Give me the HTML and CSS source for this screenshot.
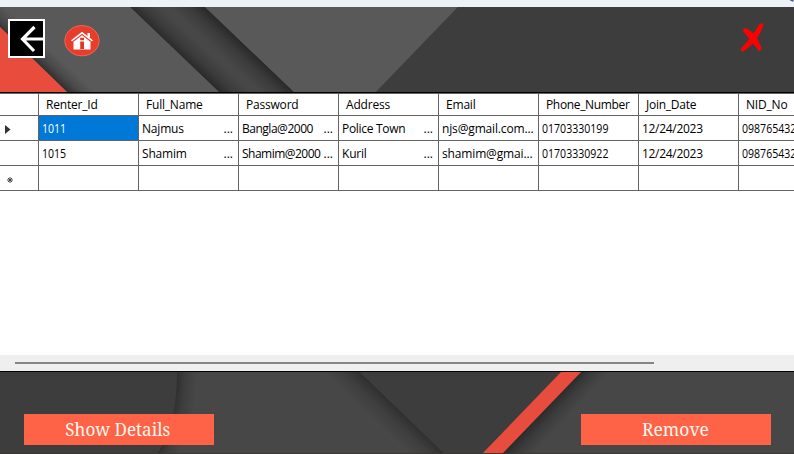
FILE: index.html
```html
<!DOCTYPE html>
<html lang="en">
<head>
<meta charset="utf-8">
<title>Renters</title>
<link rel="stylesheet" href="styles.css">
</head>
<body>
<div class="window">
  <div class="titlebar"><svg class="corner" viewBox="0 0 6 3"><path d="M0 0H6V2.500Q2 2 0 0Z" fill="#3158a5"/></svg></div>
  <header class="top">
    <svg class="backdrop" viewBox="0 0 794 85" preserveAspectRatio="none">
      <defs>
        <linearGradient id="s1" gradientUnits="userSpaceOnUse" x1="174" y1="43" x2="189" y2="27"><stop stop-color="#292929"/><stop offset=".45" stop-color="#3b3b3b"/><stop offset="1" stop-color="#474747"/></linearGradient>
        <linearGradient id="s2" gradientUnits="userSpaceOnUse" x1="250" y1="43" x2="234" y2="60"><stop stop-color="#292929"/><stop offset=".45" stop-color="#3b3b3b"/><stop offset="1" stop-color="#474747"/></linearGradient>
        <linearGradient id="s3" gradientUnits="userSpaceOnUse" x1="33" y1="53" x2="46" y2="39"><stop stop-color="#303030"/><stop offset=".45" stop-color="#494949"/><stop offset="1" stop-color="#595959"/></linearGradient>
      </defs>
      <rect width="794" height="85" fill="#474747"/>
      <path d="M130 0H168L256 85H219Z" fill="url(#s1)"/>
      <path d="M168 0H205L294 85H256Z" fill="url(#s2)"/>
      <path d="M0 0H130L219 85H0Z" fill="#595959"/>
      <path d="M0 0H20L105 85H67L0 20Z" fill="url(#s3)"/>
      <path d="M205 0H458L376 85H294Z" fill="#595959"/>
      <path d="M458 0H794V85H376Z" fill="#3d3d3d"/>
      <path d="M0 20L67 85H0Z" fill="#e84c3d"/>
    </svg>
    <button class="icon back" aria-label="Back"><svg viewBox="0 0 37 39"><rect x="1" y="1" width="35" height="37" fill="#000" stroke="#fff" stroke-width="2"/><path d="M36 20H15M26.500 8L14.500 20L26 32" fill="none" stroke="#fff" stroke-width="3.200"/></svg></button>
    <button class="icon home" aria-label="Home"><svg viewBox="0 0 36 32"><ellipse cx="18" cy="15.700" rx="17.300" ry="15.100" fill="#e83d2b" stroke="#ee7466" stroke-width=".8"/><path d="M7.500 15.800L18 7.800L28.500 15.800" fill="none" stroke="#fff" stroke-width="1.500"/><path d="M23.500 8H26V13L23.500 11.500Z" fill="#fff"/><path d="M9.500 16.800L18 10.200L26.500 16.800V24.500H9.500Z" fill="#fff"/><path d="M16.200 16.500H20V24H16.200ZM16.200 12.800H20V15.200H16.200Z" fill="#dc3927"/></svg></button>
    <button class="icon close" aria-label="Close"><svg viewBox="0 0 24 29"><path d="M4.500 6C10 7.500 17 14 20.500 25L19.500 27C15 21 8 13 4 7.500ZM22.500 1.500C20 11 11 23 2.500 27.500L1.500 26.500C9 19 15 11 20.500 1.500Z" fill="#f00" stroke="#f00" stroke-width="2" stroke-linejoin="round"/></svg></button>
  </header>
  <main class="grid-view">
    <table>
      <thead><tr><th class="marker"></th><th>Renter_Id</th><th>Full_Name</th><th>Password</th><th>Address</th><th>Email</th><th><span class="phone">Phone_Number</span></th><th><span class="join">Join_Date</span></th><th>NID_No</th></tr></thead>
      <tbody>
        <tr><td class="marker"><svg class="arrow" viewBox="0 0 6 9"><path d="M0 0L5.500 4.500L0 9Z"/></svg></td><td class="selected"><p><span class="num">1011</span></p></td><td><p><span>Najmus</span><i>...</i></p></td><td><p><span class="bangla">Bangla@2000</span><i>...</i></p></td><td><p><span class="town">Police Town</span><i>...</i></p></td><td><p><span class="mail">njs@gmail.com...</span></p></td><td><p><span class="num">01703330199</span></p></td><td><p><span class="date">12/24/2023</span></p></td><td><p><span class="num">098765432</span></p></td></tr>
        <tr><td class="marker"></td><td><p><span class="num">1015</span></p></td><td><p><span>Shamim</span><i>...</i></p></td><td><p class="tight"><span class="shamim">Shamim@2000</span><i>...</i></p></td><td><p><span>Kuril</span><i>...</i></p></td><td><p><span class="mail">shamim@gmai...</span></p></td><td><p><span class="num">01703330922</span></p></td><td><p><span class="date">12/24/2023</span></p></td><td><p><span class="num">098765432</span></p></td></tr>
        <tr><td class="marker"><svg class="new" viewBox="0 0 6 6"><path d="M3 0V6M0 3H6M1 1L5 5M5 1L1 5" stroke="#444"/></svg></td><td></td><td></td><td></td><td></td><td></td><td></td><td></td><td></td></tr>
      </tbody>
    </table>
    <div class="scrollbar"><div class="thumb"></div></div>
  </main>
  <footer class="bottom">
    <svg class="backdrop" viewBox="0 0 794 82" preserveAspectRatio="none">
      <defs>
        <radialGradient id="s4" gradientUnits="userSpaceOnUse" cx="-1" cy="0" r="198"><stop offset=".9" stop-color="#303030"/><stop offset=".94" stop-color="#3d3d3d"/><stop offset="1" stop-color="#474747"/></radialGradient>
        <linearGradient id="s5" gradientUnits="userSpaceOnUse" x1="402" y1="41" x2="385" y2="59"><stop stop-color="#303030"/><stop offset=".45" stop-color="#3e3e3e"/><stop offset="1" stop-color="#474747"/></linearGradient>
        <linearGradient id="s6" gradientUnits="userSpaceOnUse" x1="541" y1="41" x2="557" y2="56"><stop stop-color="#2b2b2b"/><stop offset=".45" stop-color="#3b3b3b"/><stop offset="1" stop-color="#474747"/></linearGradient>
      </defs>
      <rect width="794" height="82" fill="#474747"/>
      <rect width="240" height="82" fill="url(#s4)"/>
      <path d="M0 0H177C177 35 171 61 157 82H0Z" fill="#3d3d3d"/>
      <path d="M300 0H360L445 82H300Z" fill="url(#s5)"/>
      <path d="M581 0H660V82H502Z" fill="url(#s6)"/>
      <path d="M360 0H563L482 82H445Z" fill="#3d3d3d"/>
      <path d="M561 0H581L502 82H482Z" fill="#e84c3d"/>
      <path d="M0 81.500H794" stroke="#3c3536"/>
    </svg>
    <button class="action"><span class="show">Show Details</span></button>
    <button class="action"><span class="remove">Remove</span></button>
  </footer>
</div>
</body>
</html>
```
FILE: styles.css
```css
* { box-sizing: border-box; }
body { margin: 0; overflow: hidden; }
.window { width: 794px; height: 454px; display: flex; flex-direction: column; overflow: hidden; }
.titlebar { height: 7px; background: #edf2f7; display: flex; justify-content: flex-end; }
.corner { width: 5px; height: 2px; }
.top { height: 85px; position: relative; display: flex; align-items: flex-start; padding: 12px 30px 0 8px; }
.backdrop { position: absolute; inset: 0; width: 100%; height: 100%; overflow: hidden; }
button { border: 0; padding: 0; background: none; position: relative; }
.icon svg { display: block; width: 100%; height: 100%; }
.back { width: 37px; height: 39px; }
.home { width: 36px; height: 32px; margin: 6px 0 0 19px; }
.close { width: 24px; height: 29px; margin: 4px 0 0 auto; }
.grid-view { height: 280px; border-top: 1px solid #000; border-bottom: 1px solid #000; background: #fff; display: flex; flex-direction: column; overflow: hidden; }
table { width: 839px; table-layout: fixed; border-collapse: separate; border-spacing: 0; border-top: 1px solid #646464; font: 12px/16px "Open Sans", "Noto Sans", sans-serif; color: #000; }
th, td { width: 100px; height: 25px; padding: 2px 3px 0; border-right: 1px solid #646464; border-bottom: 1px solid #646464; font-weight: 400; text-align: left; white-space: nowrap; overflow: hidden; }
th { height: 22px; padding: 1px 7px 0; letter-spacing: -.2px; }
.marker { width: 39px; padding: 0 5px; }
td p { margin: 0; display: flex; justify-content: space-between; }
td i { font-style: normal; padding-right: 2px; }
.selected { background: #0078d7; color: #fff; }
.arrow { display: block; width: 6px; height: 9px; margin-top: 2px; fill: #333; }
.new { display: block; width: 6px; height: 6px; margin: 4px 0 0 2px; }
span { display: inline-block; transform-origin: 0 50%; letter-spacing: -.2px; }
.phone { letter-spacing: -.35px; }
.join { letter-spacing: -.25px; }
.num { letter-spacing: 0; transform: scaleX(.88); }
.date { letter-spacing: -.3px; }
.bangla { letter-spacing: -.48px; }
.shamim { letter-spacing: -.52px; }
.mail { letter-spacing: -.15px; }
.town { letter-spacing: -.3px; }
.scrollbar { margin-top: auto; height: 16px; background: #efefef; padding: 7px 0 0 15px; }
.thumb { width: 639px; height: 2px; background: #858585; }
.bottom { height: 82px; position: relative; display: flex; justify-content: space-between; align-items: flex-start; padding: 42px 23px 0 24px; }
.action { width: 190px; height: 31px; background: #ff6347; color: #fff8ee; font: 18px/31px "Noto Serif", "Liberation Serif", serif; }
.action span { transform-origin: 50%; letter-spacing: 0; }
.show { transform: translateX(-1.500px) scaleX(.95); }
.remove { transform: translateX(-1px) scaleX(.97); }
```
